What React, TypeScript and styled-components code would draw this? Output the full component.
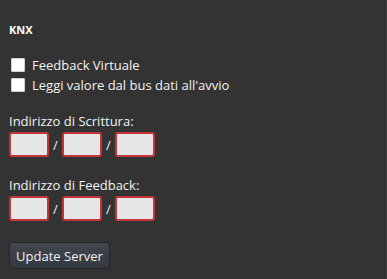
import React from "react";
import styled, { createGlobalStyle } from "styled-components";

const Global = createGlobalStyle`
  html, body { margin: 0; padding: 0; background: #333333; }
  body { font-family: "Open Sans", "DejaVu Sans", sans-serif; }
`;

const Panel = styled.div`
  box-sizing: border-box;
  width: 387px;
  height: 279px;
  background: #333333;
  border-right: 1px solid #3c3c3c;
  padding: 24px 0 0 9px;
  color: #f2f2f2;
  display: flex;
  flex-direction: column;
`;

const Title = styled.div`
  font-size: 11px;
  font-weight: 700;
  line-height: 12px;
  margin-bottom: 19px;
  color: #ffffff;
`;

const CheckRow = styled.label`
  display: flex;
  align-items: center;
  gap: 7px;
  height: 20px;
  margin-left: 2px;
  font-size: 13px;
`;

const Box = styled.span`
  width: 14px;
  height: 14px;
  background: #ffffff;
  border: 1px solid #d0d0d0;
  box-sizing: border-box;
  border-radius: 1px;
`;

const Checks = styled.div`
  display: flex;
  flex-direction: column;
  margin-bottom: 18px;
`;

const Group = styled.div<{ $mb: number }>`
  display: flex;
  flex-direction: column;
  margin-bottom: ${(p) => p.$mb}px;
`;

const Label = styled.div`
  font-size: 13px;
  line-height: 16px;
  margin-bottom: 3px;
`;

const Inputs = styled.div`
  display: flex;
  align-items: center;
`;

const Field = styled.div`
  box-sizing: border-box;
  width: 40px;
  height: 25px;
  background: #e6e6e6;
  border: 2px solid #c43535;
  border-radius: 3px;
`;

const Slash = styled.span`
  width: 13px;
  text-align: center;
  font-size: 13px;
  color: #f2f2f2;
`;

const Button = styled.button`
  box-sizing: border-box;
  width: 101px;
  height: 27px;
  padding: 0;
  font-family: inherit;
  font-size: 13px;
  color: #f2f2f2;
  background: linear-gradient(#42464e, #33373e);
  border: 1px solid #23262b;
  border-radius: 3px;
`;

function AddressGroup({ label, mb }: { label: string; mb: number }) {
  return (
    <Group $mb={mb}>
      <Label>{label}</Label>
      <Inputs>
        <Field />
        <Slash>/</Slash>
        <Field />
        <Slash>/</Slash>
        <Field />
      </Inputs>
    </Group>
  );
}

export default function App() {
  return (
    <>
      <Global />
      <Panel>
        <Title>KNX</Title>
        <Checks>
          <CheckRow>
            <Box />
            Feedback Virtuale
          </CheckRow>
          <CheckRow>
            <Box />
            Leggi valore dal bus dati all'avvio
          </CheckRow>
        </Checks>
        <AddressGroup label="Indirizzo di Scrittura:" mb={20} />
        <AddressGroup label="Indirizzo di Feedback:" mb={21} />
        <div>
          <Button>Update Server</Button>
        </div>
      </Panel>
    </>
  );
}
